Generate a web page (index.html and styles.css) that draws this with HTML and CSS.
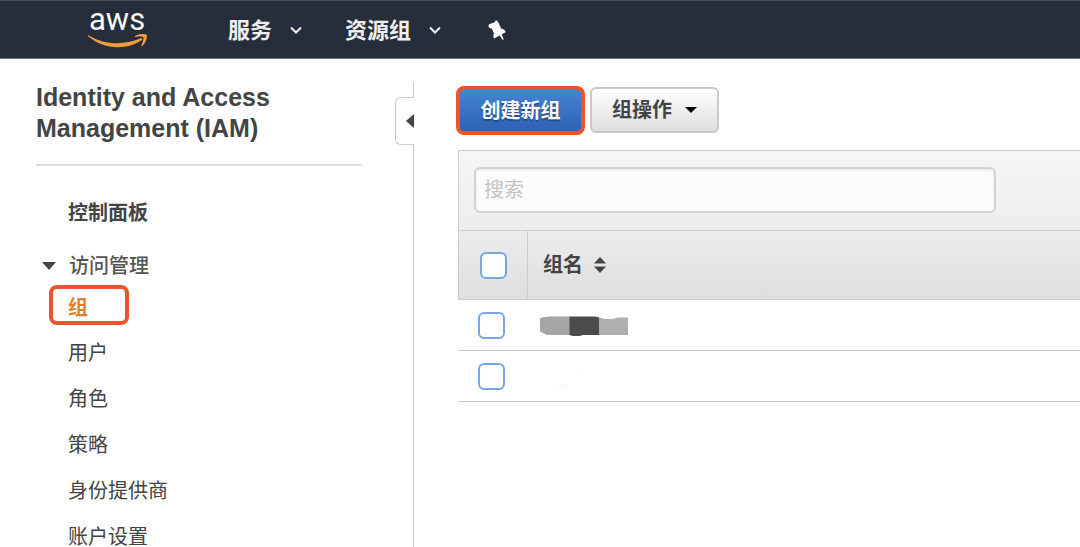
FILE: index.html
```html
<!DOCTYPE html>
<html lang="zh-CN">
<head>
<meta charset="utf-8">
<meta name="viewport" content="width=device-width, initial-scale=1">
<title>IAM</title>
<link rel="stylesheet" href="styles.css">
</head>
<body>
<header class="topbar">
  <a class="logo" href="#">
    <span class="logo-text">aws</span>
    <svg class="logo-smile" viewBox="0 0 62 16" aria-hidden="true">
      <path d="M1 2.2C.2 1.5.8.7 1.8 1.3C18 11 37 11.500 54 4.500C56 3.800 57 5.200 55.500 6.300C40 16.500 17 16 1 2.200Z"/>
      <path d="M49 1.800C53 -.6 59.500-.3 60.700.8C61.600 2.300 60 8.800 56.300 12.100C55.500 12.700 55 12.400 55.300 11.500C56.500 8.500 58 4.500 57.200 3.200C56.300 2 52.500 2.500 49.500 2.800C48.500 2.900 48.300 2.300 49 1.800Z"/>
    </svg>
  </a>
  <nav class="topnav">
    <button class="top-item" type="button">服务
      <svg class="chevron" viewBox="0 0 14 9" aria-hidden="true"><path d="M2 1.500L7 6.500L12 1.500"/></svg>
    </button>
    <button class="top-item" type="button">资源组
      <svg class="chevron" viewBox="0 0 14 9" aria-hidden="true"><path d="M2 1.500L7 6.500L12 1.500"/></svg>
    </button>
    <button class="pin" type="button" aria-label="固定">
      <svg viewBox="0 0 18 21" aria-hidden="true"><path d="M.3 6C1 3.800 2.500 3.600 4 3.300L7 2C6.800.9 7.800.1 8.900.5L10.500 2.800L13.300 8.800C15.500 8.900 17.300 10.300 17.700 12.300L13.700 14.200L15.700 19.200L14.800 20L11.500 15.600L6.300 18.400C5 17 5 15.200 6 13.500L3.800 8.500C2.300 8.700.8 7.800.3 6Z"/></svg>
    </button>
  </nav>
</header>
<div class="page">
  <aside class="sidebar">
    <div class="side-main">
      <h1 class="title">Identity and Access Management (IAM)</h1>
      <nav class="side-nav">
        <a class="dashboard" href="#">控制面板</a>
        <button class="section" type="button" aria-expanded="true">
          <svg class="caret" viewBox="0 0 14 8" aria-hidden="true"><path d="M0 0H14L7 8Z"/></svg>
          访问管理
        </button>
        <a class="side-link active" href="#">组</a>
        <a class="side-link" href="#">用户</a>
        <a class="side-link" href="#">角色</a>
        <a class="side-link" href="#">策略</a>
        <a class="side-link" href="#">身份提供商</a>
        <a class="side-link" href="#">账户设置</a>
      </nav>
    </div>
    <div class="rail">
      <button class="collapse" type="button" aria-label="收起">
        <svg viewBox="0 0 8 14" aria-hidden="true"><path d="M8 0V14L0 7Z"/></svg>
      </button>
    </div>
  </aside>
  <main class="content">
    <div class="actions">
      <button class="btn primary" type="button">创建新组</button>
      <button class="btn secondary" type="button">组操作
        <svg class="btn-caret" viewBox="0 0 12 6" aria-hidden="true"><path d="M0 0H12L6 6Z"/></svg>
      </button>
    </div>
    <section class="panel">
      <div class="filter">
        <input class="search" type="text" placeholder="搜索" aria-label="搜索">
      </div>
      <table class="groups">
        <thead>
          <tr>
            <th class="pick"><input class="tick" type="checkbox" aria-label="全选"></th>
            <th class="name">组名
              <svg class="sort" viewBox="0 0 12 16" aria-hidden="true"><path d="M0 6.500H12L6 0ZM0 9.500H12L6 16Z"/></svg>
            </th>
          </tr>
        </thead>
        <tbody>
          <tr>
            <td class="pick"><input class="tick" type="checkbox" aria-label="选择组 1"></td>
            <td class="name">
              <svg class="mask" viewBox="0 0 88 20" aria-hidden="true">
                <path fill="#a5a5a5" d="M0 2L8 .5H30V19H7L0 15.500Z"/>
                <path fill="#afafaf" d="M58 1L65 3H73L78 1.500H88V19H58Z"/>
                <path fill="#4b4b4b" d="M29.500.5H55L59 1.500V19H43L40 20H33L29.500 19Z"/>
              </svg>
            </td>
          </tr>
          <tr>
            <td class="pick"><input class="tick" type="checkbox" aria-label="选择组 2"></td>
            <td class="name">
              <svg class="mask" viewBox="0 0 88 20" aria-hidden="true"><path fill="#e6e6e6" d="M43 6h1v1h-1zM15 18h1v1h-1zM20 18h1v1h-1zM25 18h2v1h-2z"/></svg>
            </td>
          </tr>
        </tbody>
      </table>
    </section>
  </main>
</div>
</body>
</html>
```
FILE: styles.css
```css
* {
  box-sizing: border-box;
}

body {
  margin: 0;
  height: 100vh;
  overflow: hidden;
  display: flex;
  flex-direction: column;
  background: #fff;
  color: #444;
  font: 20px/30px "Liberation Sans", "Noto Sans CJK SC", sans-serif;
}

button {
  font: inherit;
  color: inherit;
  padding: 0;
  border: 0;
  background: none;
  cursor: pointer;
}

a {
  color: inherit;
  text-decoration: none;
}

svg {
  display: block;
  flex: none;
}

.topbar {
  flex: none;
  display: flex;
  align-items: center;
  height: 59px;
  padding: 2px 0 0 87px;
  gap: 80px;
  background: #272e3b;
  border-top: 1px solid #465059;
  border-bottom: 1px solid #6c717b;
}

.logo {
  display: flex;
  flex-direction: column;
  gap: 3px;
  width: 61px;
  padding-bottom: 2px;
}

.logo-text {
  padding-left: 2px;
  color: #fff;
  font: 400 31px/22px Roboto, sans-serif;
}

.logo-smile {
  width: 61px;
  height: 16px;
  fill: #f29b38;
}

.topnav {
  display: flex;
  align-items: center;
  gap: 42px;
}

.top-item {
  display: flex;
  align-items: center;
  gap: 17px;
  color: #eee;
  font-size: 22px;
  font-weight: 700;
}

.chevron {
  width: 14px;
  height: 9px;
  fill: none;
  stroke: #eee;
  stroke-width: 2;
}

.pin {
  padding-left: 4px;
}

.pin svg {
  width: 18px;
  height: 21px;
  fill: #fff;
}

.page {
  flex: 1;
  min-height: 0;
  display: flex;
}

.sidebar {
  flex: none;
  display: flex;
  padding-top: 23px;
}

.side-main {
  width: 395px;
  padding: 0 34px 0 36px;
}

.title {
  margin: 0;
  padding-bottom: 20px;
  border-bottom: 2px solid #dcdcdc;
  font-size: 25px;
  line-height: 31px;
}

.side-nav {
  display: flex;
  flex-direction: column;
  align-items: flex-start;
  padding: 32px 0 0 32px;
}

.dashboard {
  margin-bottom: 23px;
  font-weight: 700;
}

.section {
  display: flex;
  align-items: center;
  gap: 13px;
  margin-left: -26px;
  font-weight: 500;
  color: #555;
}

.caret {
  width: 14px;
  height: 8px;
  fill: #444;
}

.side-link {
  line-height: 46px;
}

.side-link.active {
  width: 80px;
  height: 40px;
  margin: 4px 0 5px -19px;
  padding-left: 15px;
  border: 4px solid #ea5530;
  border-radius: 8px;
  color: #d9822b;
  font-weight: 700;
  line-height: 38px;
}

.rail {
  display: flex;
  flex-direction: column;
  width: 19px;
}

.rail::before,
.rail::after {
  content: "";
  height: 15px;
  border-right: 1px solid #ccc;
}

.rail::after {
  flex: 1;
}

.collapse {
  display: flex;
  align-items: center;
  justify-content: flex-end;
  height: 48px;
  border: 1px solid #ccc;
  border-right: 0;
  border-radius: 6px 0 0 6px;
}

.collapse svg {
  width: 8px;
  height: 14px;
  fill: #444;
}

.content {
  flex: 1;
  min-width: 0;
  padding: 27px 0 0 42px;
}

.actions {
  display: flex;
  align-items: center;
  gap: 5px;
}

.btn {
  display: flex;
  align-items: center;
  justify-content: center;
  gap: 13px;
  width: 129px;
  font-weight: 700;
}

.primary {
  height: 49px;
  border: 4px solid #ea5530;
  border-radius: 8px;
  background: linear-gradient(#4584d4, #2d62b3);
  color: #fff;
  text-shadow: 0 2px 1px #234a85;
}

.secondary {
  height: 46px;
  margin-bottom: 2px;
  border: 2px solid #c9c9c9;
  border-radius: 6px;
  background: linear-gradient(#fff, #dedede);
}

.btn-caret {
  width: 12px;
  height: 6px;
  fill: #000;
}

.panel {
  margin: 15px 0 0 2px;
}

.filter {
  padding: 16px 15px 17px;
  border: 1px solid #ccc;
  border-width: 1px 0 0 1px;
  background: linear-gradient(#f6f6f6, #ededed);
}

.search {
  display: block;
  width: 100%;
  max-width: 522px;
  height: 46px;
  padding: 0 8px;
  border: 2px solid #d3d3d3;
  border-radius: 6px;
  background: #fcfcfc;
  box-shadow: inset 0 1px 3px #e4e4e4;
  font: inherit;
  color: #444;
}

.search::placeholder {
  color: #c4c4c4;
  opacity: 1;
}

.groups {
  width: 100%;
  border-spacing: 0;
}

.groups thead tr {
  height: 70px;
  background: linear-gradient(#ececec, #dedede);
}

.groups tbody tr {
  height: 51px;
}

.groups th {
  padding: 0;
  border: 1px solid #ccc;
  border-width: 1px 0 1px 1px;
  text-align: left;
}

.groups td {
  padding: 1px 0 0;
  border-bottom: 1px solid #ccc;
}

.groups .pick {
  width: 69px;
  padding-left: 20px;
}

.groups th.pick {
  padding-left: 21px;
}

.groups .name {
  padding-left: 13px;
}

.groups th.name {
  padding-left: 15px;
}

.tick {
  display: block;
  appearance: none;
  width: 27px;
  height: 27px;
  margin: 0;
  border: 2px solid #75a7e8;
  border-radius: 6px;
  background: #fff;
}

.sort {
  display: inline-block;
  width: 12px;
  height: 16px;
  margin-left: 5px;
  vertical-align: -1px;
  fill: #444;
}

.mask {
  width: 88px;
  height: 20px;
}
```
